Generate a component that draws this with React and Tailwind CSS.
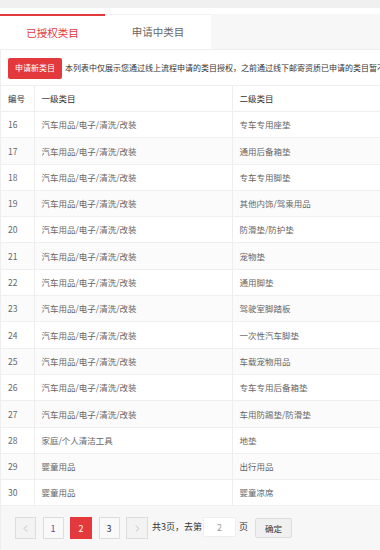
import { ChevronLeft, ChevronRight } from "lucide-react";

const rows = [
    ["16", "汽车用品/电子/清洗/改装", "专车专用座垫"],
    ["17", "汽车用品/电子/清洗/改装", "通用后备箱垫"],
    ["18", "汽车用品/电子/清洗/改装", "专车专用脚垫"],
    ["19", "汽车用品/电子/清洗/改装", "其他内饰/驾乘用品"],
    ["20", "汽车用品/电子/清洗/改装", "防滑垫/防护垫"],
    ["21", "汽车用品/电子/清洗/改装", "宠物垫"],
    ["22", "汽车用品/电子/清洗/改装", "通用脚垫"],
    ["23", "汽车用品/电子/清洗/改装", "驾驶室脚踏板"],
    ["24", "汽车用品/电子/清洗/改装", "一次性汽车脚垫"],
    ["25", "汽车用品/电子/清洗/改装", "车载宠物用品"],
    ["26", "汽车用品/电子/清洗/改装", "专车专用后备箱垫"],
    ["27", "汽车用品/电子/清洗/改装", "车用防踢垫/防滑垫"],
    ["28", "家庭/个人清洁工具", "地垫"],
    ["29", "婴童用品", "出行用品"],
    ["30", "婴童用品", "婴童凉席"],
];

export default function App() {
    return (
        <div className="w-[380px] h-[550px] overflow-hidden bg-white font-['Noto_Sans_CJK_SC','Noto_Sans',sans-serif]">
            <div className="h-2 bg-[#f0f0f0]" />
            <div className="h-[6px] bg-white" />

            {/* tabs */}
            <div className="flex h-9 bg-[#f7f7f7] border-b border-[#eeeeee]">
                <div className="w-[105px] bg-white border-t-2 border-[#e4393c] text-[#e4393c] text-[10.5px] flex items-center justify-center">
                    已授权类目
                </div>
                <div className="w-[106px] bg-white border-t border-[#f2f2f2] text-[#666] text-[10.5px] flex items-center justify-center">
                    申请中类目
                </div>
            </div>

            <div className="border-l border-[#eeeeee]">
                <div className="flex items-center gap-[3px] pt-[7px] pl-[7px] h-[29px] whitespace-nowrap overflow-hidden">
                    <button className="h-[21px] w-[54px] shrink-0 rounded-[2px] bg-[#e4393c] text-white text-[8px]">
                        申请新类目
                    </button>
                    <span className="text-[8px] text-[#333]">
                        本列表中仅展示您通过线上流程申请的类目授权，之前通过线下邮寄资质已申请的类目暂不
                    </span>
                </div>

                <table className="mt-[6px] w-[560px] border-collapse text-[8.5px] text-[#666]">
                    <thead>
                        <tr className="h-[26px] border-t border-b border-[#eeeeee] text-[#333]">
                            <th className="w-[33px] px-[7px] text-left font-normal border-r border-[#eeeeee]">编号</th>
                            <th className="w-[198px] px-[7px] text-left font-normal border-r border-[#eeeeee]">一级类目</th>
                            <th className="px-[7px] text-left font-normal">二级类目</th>
                        </tr>
                    </thead>
                    <tbody>
                        {rows.map((r, i) => (
                            <tr key={r[0]} className={`h-[26.3px] border-b border-[#f0f0f0] ${i % 2 === 1 ? "bg-[#fbfbfb]" : "bg-white"}`}>
                                <td className="px-[7px] border-r border-[#eeeeee]">{r[0]}</td>
                                <td className="px-[7px] border-r border-[#eeeeee]">{r[1]}</td>
                                <td className="px-[7px]">{r[2]}</td>
                            </tr>
                        ))}
                    </tbody>
                </table>

                {/* pagination */}
                <div className="bg-[#f7f7f7] h-[60px] pt-[11px] pl-[14px] flex items-start text-[9px] text-[#333]">
                    <div className="flex gap-[6.5px]">
                        <span className="w-[21px] h-[22px] border border-[#dddddd] bg-[#f3f3f3] text-[#aaa] flex items-center justify-center">
                            <ChevronLeft size={11} strokeWidth={1.5} />
                        </span>
                        <span className="w-[21px] h-[22px] border border-[#dddddd] bg-[#f9f9f9] text-[#5b4a9c] flex items-center justify-center">1</span>
                        <span className="w-[22px] h-[22px] border border-[#e4393c] bg-[#e4393c] text-white flex items-center justify-center">2</span>
                        <span className="w-[21px] h-[22px] border border-[#dddddd] bg-[#f9f9f9] text-[#333] flex items-center justify-center">3</span>
                        <span className="w-[22px] h-[22px] border border-[#dddddd] bg-[#f3f3f3] text-[#aaa] flex items-center justify-center">
                            <ChevronRight size={11} strokeWidth={1.5} />
                        </span>
                    </div>
                    <span className="ml-[4px] h-[20px] leading-[20px]">共3页，去第</span>
                    <span className="ml-[1px] w-[33px] h-[20px] bg-white border border-[#eeeeee] text-[#999] flex items-center justify-center">2</span>
                    <span className="ml-[3px] h-[20px] leading-[20px]">页</span>
                    <button className="ml-[7px] mt-[1px] w-[37px] h-[20px] bg-[#f0f0f0] border border-[#dddddd] rounded-[2px] text-[8.5px] text-[#333]">
                        确定
                    </button>
                </div>
            </div>
        </div>
    );
}
